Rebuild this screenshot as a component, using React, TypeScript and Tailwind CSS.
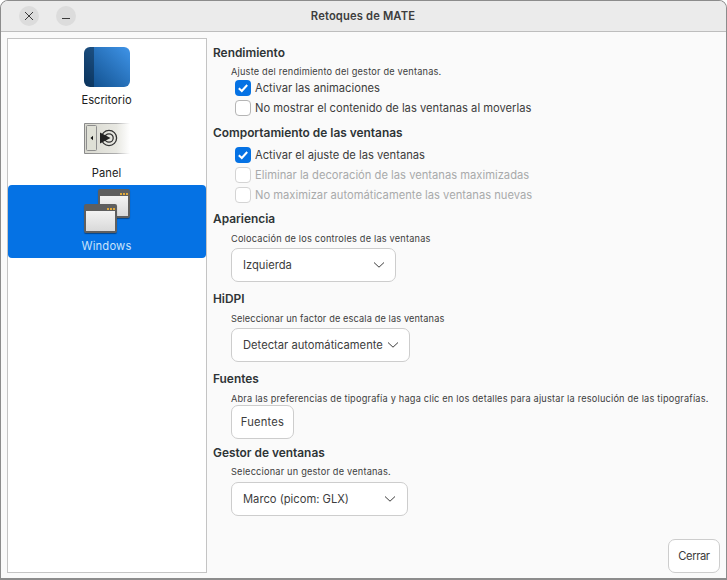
import React from "react";

const font = { fontFamily: "Inter, sans-serif" };

function Check({ checked, disabled, label }: { checked?: boolean; disabled?: boolean; label: string }) {
  return (
    <div className="flex h-5 items-center pl-[28px]">
      {checked ? (
        <span className="flex h-[16px] w-[16px] items-center justify-center rounded-[4px] bg-[#0572e4]">
          <svg width="12" height="12" viewBox="0 0 12 12" fill="none">
            <path d="M1.8 6.2 L4.8 9 L10.2 3" stroke="#fff" strokeWidth="2" />
          </svg>
        </span>
      ) : (
        <span className={`h-[16px] w-[16px] rounded-[4px] border bg-white ${disabled ? "border-[#d4d4d4]" : "border-[#b5b5b5]"}`} />
      )}
      <span className={`ml-[4px] text-[11.2px] ${disabled ? "text-[#a9aaab]" : "text-[#3d3d3d]"}`}>{label}</span>
    </div>
  );
}

function Heading({ children }: { children: React.ReactNode }) {
  return <div className="h-[17px] pl-[6px] text-[11.9px] leading-[17px] font-semibold text-[#2e3436]">{children}</div>;
}

function Sub({ children }: { children: React.ReactNode }) {
  return <div className="h-[14px] pl-[24px] text-[9.2px] leading-[14px] tracking-[0.2px] text-[#3d3d3d]">{children}</div>;
}

function Chevron() {
  return (
    <svg width="12" height="8" viewBox="0 0 12 8" fill="none">
      <path d="M1 1.5 L6 6.2 L11 1.5" stroke="#3d3d3d" strokeWidth="1" />
    </svg>
  );
}

function Select({ label, width, gap }: { label: string; width: string; gap: string }) {
  return (
    <div className={`ml-[24px] flex h-[34px] ${width} items-center rounded-[7px] border border-[#cdcdcd] bg-white pl-[11px]`}>
      <span className="text-[11.2px] whitespace-nowrap text-[#3d3d3d]">{label}</span>
      <span className={`${gap} flex`}><Chevron /></span>
    </div>
  );
}

function PanelIcon() {
  return (
    <svg width="46" height="32" viewBox="0 0 46 32">
      <defs>
        <linearGradient id="pg" x1="0" x2="1" y1="0" y2="0">
          <stop offset="0" stopColor="#d8d8cf" />
          <stop offset="0.7" stopColor="#e8e8e2" />
          <stop offset="1" stopColor="#ffffff" />
        </linearGradient>
        <linearGradient id="ps" x1="0" x2="1" y1="0" y2="0">
          <stop offset="0" stopColor="#8a8a8a" />
          <stop offset="0.7" stopColor="#b0b0b0" />
          <stop offset="1" stopColor="#ffffff" />
        </linearGradient>
      </defs>
      <path d="M46 0.5 H0.5 V30.5 H46" fill="url(#pg)" stroke="url(#ps)" />
      <rect x="2.5" y="2.5" width="10" height="25" rx="1" fill="#dfe0d6" stroke="#8e8e8e" />
      <path d="M6.5 15 L9 12.8 V17.2 Z" fill="#111" />
      <circle cx="25" cy="15" r="7.6" fill="none" stroke="#333" strokeWidth="1.3" />
      <circle cx="25" cy="15" r="4.2" fill="none" stroke="#333" strokeWidth="1.3" />
      <path d="M16 9.5 L26.5 15 L16 20.5 Z" fill="#222" />
    </svg>
  );
}

function Win({ w, h }: { w: number; h: number }) {
  return (
    <div className="flex flex-col overflow-hidden rounded-[2px] border-2 border-[#5f5f5f] bg-gradient-to-b from-[#fafafa] to-[#d9d9d9] shadow-[0_1px_1px_rgba(0,0,0,0.4)]" style={{ width: w, height: h }}>
      <div className="flex h-[5px] items-center justify-end gap-[1px] bg-[#5f5f5f]">
        <i className="h-[2px] w-[2px] bg-[#e0a93b]" />
        <i className="h-[2px] w-[2px] bg-[#e0a93b]" />
        <i className="h-[2px] w-[2px] bg-[#e0a93b]" />
      </div>
    </div>
  );
}

export default function App() {
  return (
    <div style={font} className="flex h-[580px] w-[727px] flex-col overflow-hidden rounded-t-[8px] border border-b-2 border-[#8c8c8c] bg-[#fafafa]">
      <div className="flex h-[31px] shrink-0 items-center border-b border-[#bdbdbd] bg-[#ebebeb]">
        <div className="flex items-center gap-[17px] pl-[18px]">
          <span className="flex h-5 w-5 items-center justify-center rounded-full bg-[#dcdcdc]">
            <svg width="10" height="10" viewBox="0 0 10 10"><path d="M1 1 L9 9 M9 1 L1 9" stroke="#3a3a3a" strokeWidth="1" /></svg>
          </span>
          <span className="flex h-5 w-5 items-center justify-center rounded-full bg-[#dcdcdc]">
            <svg width="10" height="10" viewBox="0 0 10 10"><path d="M1 7.5 H9" stroke="#3a3a3a" strokeWidth="1" /></svg>
          </span>
        </div>
        <div className="flex-1 pr-[76px] text-center text-[11.2px] font-semibold tracking-[0.15px] text-[#3d3d3d]">Retoques de MATE</div>
      </div>
      <div className="flex min-h-0 flex-1 px-[6px] pt-[6px] pb-[5px]">
        <div className="flex w-[200px] shrink-0 flex-col border border-[#c4c4c4] bg-white">
          <div className="flex h-[73px] flex-col items-center pt-[8px]">
            <div className="h-[40px] w-[46px] rounded-[6px] bg-[linear-gradient(to_right,rgba(0,0,0,0.32)_10px,transparent_10px),linear-gradient(45deg,#0d4a86,#3f94e8)]" />
            <span className="mt-[6px] pr-[1px] text-[11.2px] leading-[14px] text-[#1c1c1c]">Escritorio</span>
          </div>
          <div className="flex h-[73px] flex-col items-center pt-[11px]">
            <PanelIcon />
            <span className="mt-[11px] pr-[1px] text-[11.2px] leading-[14px] text-[#1c1c1c]">Panel</span>
          </div>
          <div className="flex h-[73px] flex-col items-center rounded-[4px] bg-[#0572e4]">
            <div className="relative mt-[4px] h-[44px] w-[46px]">
              <div className="absolute top-0 right-0"><Win w={32} h={29} /></div>
              <div className="absolute bottom-0 left-0"><Win w={33} h={29} /></div>
            </div>
            <span className="mt-[6px] pr-[1px] text-[11.2px] leading-[14px] tracking-[0.2px] text-[#c9e2fb]">Windows</span>
          </div>
        </div>
        <div className="relative flex min-w-0 flex-1 flex-col pt-[6px]">
          <Heading>Rendimiento</Heading>
          <div className="mt-[4px] h-[13px]"><Sub>Ajuste del rendimiento del gestor de ventanas.</Sub></div>
          <Check checked label="Activar las animaciones" />
          <Check label="No mostrar el contenido de las ventanas al moverlas" />
          <div className="mt-[6px]"><Heading>Comportamiento de las ventanas</Heading></div>
          <div className="mt-[4px]"><Check checked label="Activar el ajuste de las ventanas" /></div>
          <Check disabled label="Eliminar la decoración de las ventanas maximizadas" />
          <Check disabled label="No maximizar automáticamente las ventanas nuevas" />
          <div className="mt-[5px]"><Heading>Apariencia</Heading></div>
          <div className="mt-[5px]"><Sub>Colocación de los controles de las ventanas</Sub></div>
          <div className="mt-[2px]"><Select label="Izquierda" width="w-[165px]" gap="ml-auto mr-[10px]" /></div>
          <div className="mt-[8px]"><Heading>HiDPI</Heading></div>
          <div className="mt-[5px]"><Sub><span className="tracking-[0.13px]">Seleccionar un factor de escala de las ventanas</span></Sub></div>
          <div className="mt-[2px]"><Select label="Detectar automáticamente" width="w-[179px]" gap="ml-auto mr-[10px]" /></div>
          <div className="mt-[8px]"><Heading>Fuentes</Heading></div>
          <div className="mt-[5px]"><Sub>Abra las preferencias de tipografía y haga clic en los detalles para ajustar la resolución de las tipografías.</Sub></div>
          <button className="-mt-px ml-[24px] flex h-[34px] w-[63px] items-center justify-center rounded-[7px] border border-[#cdcdcd] bg-white text-[11.2px] tracking-[0.2px] text-[#3d3d3d]">Fuentes</button>
          <div className="mt-[5px]"><Heading>Gestor de ventanas</Heading></div>
          <div className="mt-[4px]"><Sub>Seleccionar un gestor de ventanas.</Sub></div>
          <div className="mt-[3px]"><Select label="Marco (picom: GLX)" width="w-[177px]" gap="ml-auto mr-[11px]" /></div>
          <button className="mt-auto ml-auto flex h-[34px] w-[52px] items-center justify-center self-end rounded-[7px] border border-[#cdcdcd] bg-white text-[11.2px] tracking-[-0.4px] text-[#3d3d3d]">Cerrar</button>
        </div>
      </div>
    </div>
  );
}
